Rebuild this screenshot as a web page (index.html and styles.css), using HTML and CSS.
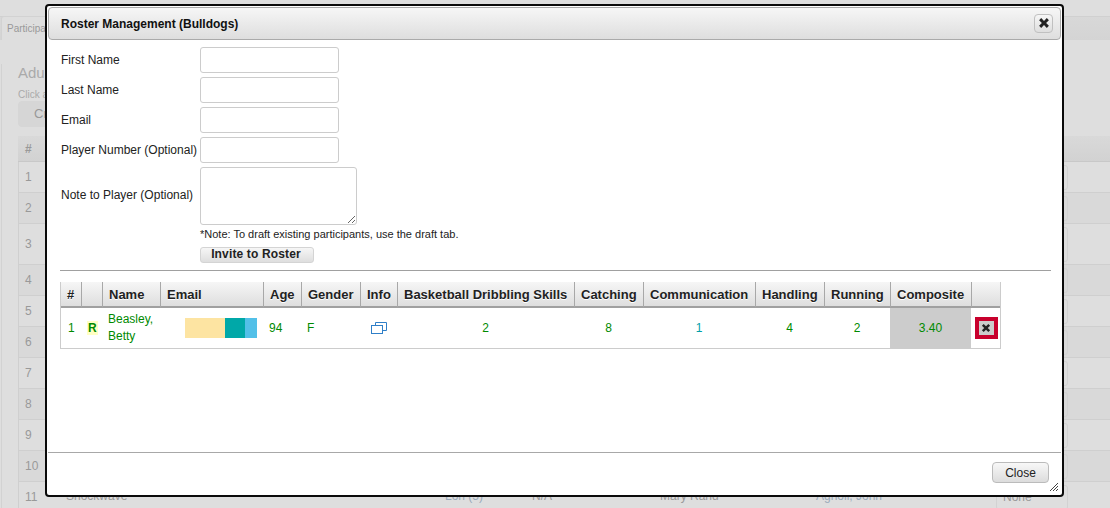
FILE: index.html
```html
<!DOCTYPE html>
<html lang="en">
<head>
<meta charset="utf-8">
<title>Roster Management</title>
<link rel="stylesheet" href="styles.css">
</head>
<body>
<div class="page">
  <div class="tabstrip"><div class="tab">Participa</div></div>
  <div class="panel">
    <h2 class="page-title">Adul</h2>
    <p class="hint">Click a</p>
    <div class="page-btn">Cr</div>
    <div class="bg-table">
      <div class="bg-row bg-head"><span class="bg-num">#</span></div>
      <div class="bg-row"><span class="bg-num">1</span><span class="bg-sel"></span></div>
      <div class="bg-row alt"><span class="bg-num">2</span><span class="bg-sel"></span></div>
      <div class="bg-row tall"><span class="bg-num">3</span><span class="bg-sel"></span></div>
      <div class="bg-row alt"><span class="bg-num">4</span><span class="bg-sel"></span></div>
      <div class="bg-row"><span class="bg-num">5</span><span class="bg-sel"></span></div>
      <div class="bg-row alt"><span class="bg-num">6</span><span class="bg-sel"></span></div>
      <div class="bg-row"><span class="bg-num">7</span><span class="bg-sel"></span></div>
      <div class="bg-row alt"><span class="bg-num">8</span><span class="bg-sel"></span></div>
      <div class="bg-row"><span class="bg-num">9</span><span class="bg-sel"></span></div>
      <div class="bg-row alt"><span class="bg-num">10</span><span class="bg-sel"></span></div>
      <div class="bg-row last">
        <span class="bg-num">11</span>
        <span class="c-team">Shockwave</span>
        <span class="c-div">Lon (5)</span>
        <span class="c-na">N/A</span>
        <span class="c-coach">Mary Rand</span>
        <span class="c-link">Agnoli, John</span>
        <span class="bg-sel">None</span>
      </div>
    </div>
  </div>
</div>

<div class="dialog" role="dialog">
  <header class="titlebar">
    <span class="dialog-title">Roster Management (Bulldogs)</span>
    <button class="title-close" type="button" aria-label="Close">
      <svg class="x-icon" viewBox="0 0 12 12" width="12" height="12"><path d="M1.1 3.2 3.2 1.1 6 3.9 8.8 1.1 10.9 3.2 8.1 6 10.9 8.8 8.8 10.9 6 8.1 3.2 10.9 1.1 8.8 3.9 6Z"/></svg>
    </button>
  </header>

  <div class="content">
    <form class="roster-form">
      <label class="f-label">First Name</label><input class="f-input" type="text">
      <label class="f-label">Last Name</label><input class="f-input" type="text">
      <label class="f-label">Email</label><input class="f-input" type="text">
      <label class="f-label">Player Number (Optional)</label><input class="f-input" type="text">
      <label class="f-label note-label">Note to Player (Optional)</label><textarea class="f-area"></textarea>
      <span></span><p class="f-note">*Note: To draft existing participants, use the draft tab.</p>
      <span></span><div><button class="invite" type="button">Invite to Roster</button></div>
    </form>

    <hr class="rule">

    <table class="roster">
      <colgroup>
        <col class="w-num"><col class="w-r"><col class="w-name"><col class="w-email"><col class="w-age"><col class="w-gender"><col class="w-info"><col class="w-bball"><col class="w-catch"><col class="w-comm"><col class="w-hand"><col class="w-run"><col class="w-comp"><col class="w-del">
      </colgroup>
      <thead>
        <tr>
          <th>#</th><th></th><th>Name</th><th>Email</th><th>Age</th><th>Gender</th><th>Info</th>
          <th>Basketball Dribbling Skills</th><th>Catching</th><th>Communication</th><th>Handling</th><th>Running</th><th>Composite</th><th></th>
        </tr>
      </thead>
      <tbody>
        <tr>
          <td class="first">1</td>
          <td class="left"><b class="rank">R</b></td>
          <td class="left">Beasley,<br>Betty</td>
          <td><div class="email-mask"><i class="m-a"></i><i class="m-b"></i><i class="m-c"></i></div></td>
          <td class="left">94</td>
          <td class="left">F</td>
          <td class="info">
            <svg viewBox="0 0 16 12" width="16" height="12" fill="none" stroke="#2f7fc8"><path d="M4.5 3V.5h11v8H12"/><rect x=".5" y="3.5" width="11" height="8"/></svg>
          </td>
          <td class="mid">2</td>
          <td class="mid">8</td>
          <td class="mid teal">1</td>
          <td class="mid">4</td>
          <td class="mid">2</td>
          <td class="mid comp">3.40</td>
          <td class="del-cell"><button class="del" type="button" aria-label="Remove"><svg class="x-icon" viewBox="0 0 12 12" width="10" height="10"><path d="M1.1 3.2 3.2 1.1 6 3.9 8.8 1.1 10.9 3.2 8.1 6 10.9 8.8 8.8 10.9 6 8.1 3.2 10.9 1.1 8.8 3.9 6Z"/></svg></button></td>
        </tr>
      </tbody>
    </table>
  </div>

  <footer class="footer"><button class="close-btn" type="button">Close</button></footer>
  <svg class="grip" viewBox="0 0 8 8" width="8" height="8" stroke="#444" stroke-width="1"><path d="M0 8 8 0M3 8 8 3M6 8 8 6"/></svg>
</div>
</body>
</html>
```
FILE: styles.css
```css
* { box-sizing: border-box; }
html, body { margin: 0; height: 100%; }
body {
  width: 1110px;
  height: 508px;
  overflow: hidden;
  background: #dedede;
  font-family: "Liberation Sans", Arial, sans-serif;
  font-size: 12px;
  color: #222;
  position: relative;
}

/* dimmed page behind the dialog */
.page { height: 508px; overflow: hidden; color: #999; }
.tabstrip {
  margin-top: 16px;
  height: 24px;
  padding-left: 1px;
  border-top: 1px solid #d0d0d0;
  background: linear-gradient(#d8d8d8, #d4d4d4);
}
.tab {
  width: 60px;
  height: 24px;
  margin-top: -1px;
  padding: 5px 0 0 5px;
  font-size: 10px;
  line-height: 14px;
  white-space: nowrap;
  background: #dedede;
  border: 1px solid #d2d2d2;
  border-bottom: 0;
  border-radius: 3px 3px 0 0;
}
.panel { margin-left: 1px; padding-left: 16px; border-left: 1px solid #d2d2d2; }
.page-title { margin: 24px 0 0; font-size: 15px; font-weight: 400; line-height: 17px; color: #aaa; }
.hint { margin: 8px 0 0; font-size: 10px; line-height: 12px; color: #aaa; }
.page-btn {
  width: 80px;
  height: 26px;
  padding: 4px 0 0 15px;
  font-size: 13px;
  line-height: 16px;
  border-radius: 4px;
  background: #d6d6d6;
  border: 1px solid #d6d6d6;
}
.bg-table { margin-top: 9px; width: 1200px; }
.bg-row {
  position: relative;
  display: flex;
  align-items: center;
  height: 31px;
  padding-bottom: 1px;
  border-bottom: 1px solid #cfcfcf;
  border-left: 1px solid #cfcfcf;
}
.bg-head {
  height: 26px;
  padding-bottom: 0;
  border-left: 0;
  border-bottom: 1px solid #c8c8c8;
  background: linear-gradient(#d9d9d9, #d2d2d2);
  font-weight: 700;
}
.bg-row.tall { height: 41px; }
.bg-row.alt { background: #d9d9d9; }
.bg-num { width: 40px; padding-left: 6px; }
.bg-head .bg-num { padding-left: 7px; }
.bg-sel {
  position: absolute;
  left: 977px;
  top: 3px;
  width: 72px;
  height: 25px;
  border: 1px solid #d2d2d2;
  border-radius: 3px;
  padding-left: 6px;
  line-height: 23px;
}
.tall .bg-sel { height: 35px; }
.last span[class^="c-"] { position: absolute; top: 0; line-height: 29px; white-space: nowrap; }
.c-team { left: 47px; }
.c-div { left: 426px; color: #9ab; }
.c-na { left: 513px; }
.c-coach { left: 641px; }
.c-link { left: 797px; color: #9ab; }

/* dialog */
.dialog {
  position: absolute;
  left: 45px;
  top: 4px;
  width: 1019px;
  height: 493px;
  background: #fff;
  border: 2px solid #0a0a0a;
  border-radius: 4px;
  display: flex;
  flex-direction: column;
  padding: 1px;
}
.titlebar {
  flex: none;
  height: 33px;
  display: flex;
  align-items: center;
  justify-content: space-between;
  padding: 0 7px 0 12px;
  border: 1px solid #aaa;
  border-radius: 4px;
  background: linear-gradient(#f6f6f6, #dedede);
}
.dialog-title { font-weight: 700; font-size: 12px; color: #111; }
.title-close {
  width: 19px;
  height: 19px;
  padding: 0;
  margin-top: -1px;
  display: flex;
  align-items: center;
  justify-content: center;
  border: 1px solid #c0c0c0;
  border-radius: 4px;
  background: linear-gradient(#f6f6f6, #dedede);
}
.x-icon { display: block; fill: #222; }

.content { flex: 1; padding: 7px 10px 0 12px; }
.roster-form {
  display: grid;
  grid-template-columns: 139px 1fr;
  row-gap: 4px;
  padding-left: 1px;
  align-items: center;
}
.f-label { color: #222; white-space: nowrap; }
.note-label { margin-top: -2px; }
.f-input {
  width: 139px;
  height: 26px;
  padding: 0 4px;
  background: #fff;
  border: 1px solid #ccc;
  border-radius: 3px;
}
.f-area {
  display: block;
  width: 157px;
  height: 58px;
  background: #fff;
  border: 1px solid #ccc;
  border-radius: 3px;
}
.f-note { margin: -1px 0 3px; font-size: 11px; line-height: 12px; color: #222; }
.invite {
  display: block;
  width: 114px;
  height: 16px;
  padding: 0 2px 2px 0;
  font: 700 12px/12px "Liberation Sans", Arial, sans-serif;
  letter-spacing: .15px;
  color: #222;
  border: 1px solid #d4d4d4;
  border-radius: 3px;
  background: linear-gradient(#f6f6f6, #dedede);
}
.rule { height: 1px; margin: 7px 0 11px; border: 0; background: #a0a0a0; }

.roster {
  table-layout: fixed;
  width: 941px;
  border-collapse: separate;
  border-spacing: 0;
  border: 1px solid #ccc;
  border-top: 0;
}
.w-num { width: 21px; } .w-r { width: 21px; } .w-name { width: 58px; } .w-email { width: 103px; }
.w-age { width: 38px; } .w-gender { width: 59px; } .w-info { width: 37px; } .w-bball { width: 177px; }
.w-catch { width: 69px; } .w-comm { width: 112px; } .w-hand { width: 69px; } .w-run { width: 66px; }
.w-comp { width: 81px; } .w-del { width: 28px; }
.roster th {
  height: 26px;
  padding: 1px 0 0 6px;
  text-align: left;
  font-size: 13px;
  font-weight: 700;
  color: #222;
  white-space: nowrap;
  background: linear-gradient(#f6f6f6, #dedede);
  border-right: 1px solid #a8a8a8;
  border-bottom: 2px solid #a0a0a0;
  text-shadow: 0 1px 0 #fff;
}
.roster th:last-child { border-right: 0; }
.roster td {
  height: 40px;
  padding: 0;
  color: #008a00;
  line-height: 17px;
}
.roster td.first { padding-left: 7px; }
.roster td.left { padding-left: 5px; }
.rank { background: #ffffc4; padding: 0 1px; }
.email-mask { display: flex; height: 20px; margin-left: 24px; }
.email-mask i { display: block; height: 20px; }
.m-a { width: 40px; background: #fde4a2; }
.m-b { width: 20px; background: #00a8a8; }
.m-c { width: 12px; background: #52c0e8; }
.info svg { display: block; margin: -1px 0 0 10px; }
.mid { text-align: center; }
.roster td.mid { padding-right: 2px; }
.roster td.teal { color: #00a0a8; }
.roster td.comp { background: #ccc; box-shadow: inset -1px 0 0 #fff, -1px 0 0 #ccc; }
.roster td.del-cell { padding-left: 3px; }
.del {
  width: 23px;
  height: 22px;
  padding: 0 2px 0 0;
  display: flex;
  align-items: center;
  justify-content: center;
  background: #ccc;
  border: 4px solid #c8002d;
  border-radius: 0;
}

.footer {
  flex: none;
  height: 42px;
  border-top: 1px solid #a8a8a8;
  padding: 9px 12px 0 0;
  display: flex;
  justify-content: flex-end;
  align-items: flex-start;
}
.close-btn {
  width: 57px;
  height: 21px;
  padding: 0;
  font: 12px "Liberation Sans", Arial, sans-serif;
  color: #222;
  border: 1px solid #bbb;
  border-radius: 4px;
  background: linear-gradient(#f8f8f8, #dcdcdc);
}
.grip { position: absolute; right: 4px; bottom: 4px; }
```
